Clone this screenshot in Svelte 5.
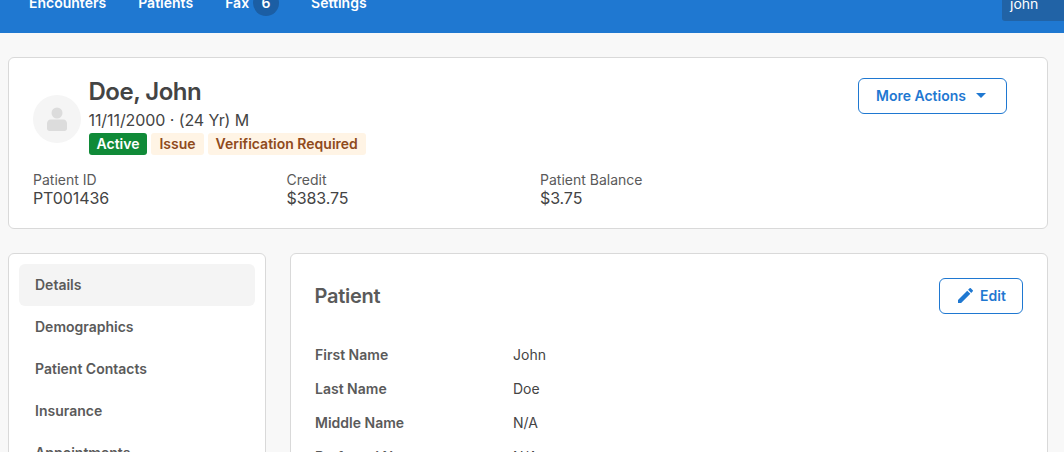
<script>
  const navItems = [
    { label: "Encounters" },
    { label: "Patients" },
    { label: "Fax", count: 6 },
    { label: "Settings" }
  ];
  const stats = [
    { label: "Patient ID", value: "PT001436" },
    { label: "Credit", value: "$383.75" },
    { label: "Patient Balance", value: "$3.75" }
  ];
  const sections = ["Details", "Demographics", "Patient Contacts", "Insurance", "Appointments"];
  const fields = [
    { label: "First Name", value: "John" },
    { label: "Last Name", value: "Doe" },
    { label: "Middle Name", value: "N/A" },
    { label: "Preferred Name", value: "N/A" }
  ];
</script>

<div class="page">
  <header class="topbar">
    <nav class="nav">
      {#each navItems as item}
        <span class="nav-item">
          {item.label}
          {#if item.count}<span class="count">{item.count}</span>{/if}
        </span>
      {/each}
    </nav>
    <div class="user">john</div>
  </header>

  <main class="content">
    <section class="card summary">
      <div class="summary-top">
        <div class="identity">
          <div class="avatar">
            <svg width="20" height="24" viewBox="0 0 20 24" fill="#dcdcdc">
              <circle cx="10" cy="6" r="5.500" />
              <path d="M3.500 12.500h13c2 0 3.500 1.800 3.500 4v5c0 1.500-1 2.500-2.500 2.500h-15c-1.500 0-2.500-1-2.500-2.500v-5c0-2.200 1.500-4 3.500-4z" />
            </svg>
          </div>
          <div class="who">
            <h1>Doe, John</h1>
            <div class="dob">11/11/2000 · (24 Yr) M</div>
            <div class="badges">
              <span class="badge active">Active</span>
              <span class="badge warn">Issue</span>
              <span class="badge warn">Verification Required</span>
            </div>
          </div>
        </div>
        <button class="btn more">
          More Actions
          <svg width="10" height="5" viewBox="0 0 10 5" fill="#1f78d1"><path d="M0 0h10L5 5z" /></svg>
        </button>
      </div>
      <div class="stats">
        {#each stats as stat}
          <div class="stat">
            <div class="stat-label">{stat.label}</div>
            <div class="stat-value">{stat.value}</div>
          </div>
        {/each}
      </div>
    </section>

    <div class="columns">
      <aside class="card sidebar">
        {#each sections as section, i}
          <div class="side-item" class:selected={i === 0}>{section}</div>
        {/each}
      </aside>

      <section class="card detail">
        <div class="detail-head">
          <h2>Patient</h2>
          <button class="btn edit">
            <svg width="15" height="15" viewBox="3 3 18 18" fill="#1f78d1">
              <path d="M3 17.250V21h3.750L17.810 9.940l-3.750-3.750L3 17.250zM20.710 7.040a1 1 0 0 0 0-1.410l-2.340-2.340a1 1 0 0 0-1.410 0l-1.830 1.830 3.750 3.750 1.830-1.830z" />
            </svg>
            Edit
          </button>
        </div>
        <div class="fields">
          {#each fields as field}
            <div class="field">
              <div class="field-label">{field.label}</div>
              <div class="field-value">{field.value}</div>
            </div>
          {/each}
        </div>
      </section>
    </div>
  </main>
</div>

<style>
  :global(body) {
    margin: 0;
    overflow: hidden;
    background: #f8f8f8;
  }

  .page {
    height: 452px;
    overflow: hidden;
    font-family: Inter, "Noto Sans", sans-serif;
    color: #444;
  }

  .topbar {
    height: 33px;
    background: #1f78d1;
    display: flex;
    justify-content: space-between;
    align-items: flex-start;
    overflow: hidden;
  }

  .nav {
    display: flex;
    gap: 32px;
    padding-left: 29px;
    margin-top: -10px;
  }

  .nav-item {
    display: flex;
    align-items: center;
    gap: 4px;
    color: #fff;
    font-size: 14px;
    font-weight: 600;
    line-height: 20px;
  }

  .count {
    width: 26px;
    height: 26px;
    border-radius: 50%;
    background: #1b5ea4;
    display: flex;
    align-items: center;
    justify-content: center;
    font-size: 14px;
  }

  .user {
    width: 62px;
    height: 21px;
    box-sizing: border-box;
    padding-left: 8px;
    background: #2163a6;
    border-bottom-left-radius: 3px;
    color: #fff;
    font-size: 14px;
    line-height: 7px;
  }

  .content {
    width: 1040px;
    margin-left: 8px;
    padding-top: 24px;
  }

  .card {
    background: #fff;
    border: 1px solid #d9d9d9;
    border-radius: 6px;
    box-sizing: border-box;
  }

  .summary {
    height: 172px;
    padding: 20px 40px 0 24px;
  }

  .summary-top {
    display: flex;
    justify-content: space-between;
    align-items: flex-start;
  }

  .identity {
    display: flex;
    align-items: center;
    gap: 7.500px;
  }

  .avatar {
    width: 48px;
    height: 48px;
    margin-top: 5px;
    border-radius: 50%;
    background: #f5f5f5;
    display: flex;
    align-items: center;
    justify-content: center;
  }

  .who h1 {
    margin: 0;
    font-size: 24px;
    font-weight: 600;
    letter-spacing: -0.5px;
    line-height: 28px;
    color: #444;
  }

  .dob {
    font-size: 16px;
    line-height: 24px;
    margin-top: 2px;
    letter-spacing: -0.08px;
  }

  .badges {
    display: flex;
    gap: 4px;
    margin-top: 1px;
  }

  .badge {
    height: 22px;
    padding: 0 8px;
    border-radius: 3px;
    font-size: 14px;
    font-weight: 600;
    line-height: 22px;
  }

  .active {
    background: #108a38;
    color: #fff;
  }

  .warn {
    background: #fff4e5;
    color: #8f4a1c;
  }

  .btn {
    box-sizing: border-box;
    height: 36px;
    background: #fff;
    border: 1px solid #1f78d1;
    border-radius: 6px;
    color: #1f78d1;
    font-family: inherit;
    font-size: 14px;
    font-weight: 600;
    display: inline-flex;
    align-items: center;
    justify-content: center;
    padding: 0 0 1px;
  }

  .more {
    width: 149px;
    gap: 10px;
    padding-right: 3px;
  }

  .edit {
    width: 84px;
    gap: 7px;
    padding-left: 2px;
  }

  .stats {
    display: flex;
    margin-top: 16px;
  }

  .stat {
    width: 253.500px;
  }

  .stat-label {
    font-size: 14px;
    line-height: 18px;
    color: #5a5a5a;
  }

  .stat-value {
    font-size: 16px;
    line-height: 19px;
    letter-spacing: -0.1px;
    color: #444;
  }

  .columns {
    display: flex;
    gap: 24px;
    margin-top: 24px;
    align-items: flex-start;
  }

  .sidebar {
    width: 258px;
    height: 260px;
    padding: 10px;
    flex-shrink: 0;
  }

  .side-item {
    height: 42px;
    padding-left: 16px;
    border-radius: 6px;
    font-size: 14px;
    font-weight: 600;
    line-height: 42px;
    color: #5a5a5a;
  }

  .selected {
    background: #f4f4f4;
  }

  .detail {
    flex: 1;
    height: 260px;
    padding: 24px 24px 0;
  }

  .detail-head {
    display: flex;
    justify-content: space-between;
    align-items: center;
    height: 36px;
  }

  .detail-head h2 {
    margin: 0 0 0 -0.5px;
    font-size: 20px;
    font-weight: 600;
    letter-spacing: -0.25px;
    color: #5a5a5a;
  }

  .fields {
    margin-top: 23px;
  }

  .field {
    display: flex;
    height: 34px;
    align-items: center;
    font-size: 14px;
  }

  .field-label {
    width: 198px;
    font-weight: 600;
    color: #5a5a5a;
  }

  .field-value {
    color: #444;
  }
</style>
